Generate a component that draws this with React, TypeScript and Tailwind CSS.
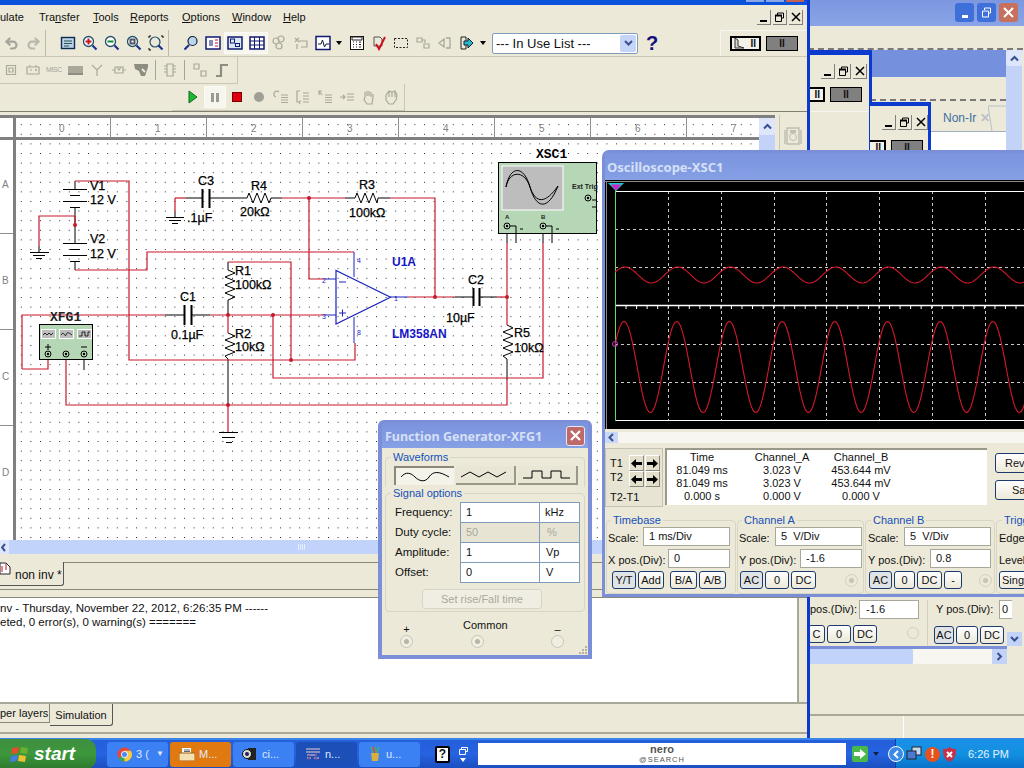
import type { ReactNode } from "react";
import { Redo2, Undo2 } from "lucide-react";

const RED = "#c8182c";
const BLUE = "#1a22c0";

const wave = (amp: number, centre: number, peak: number) => {
  const pts: string[] = [];
  for (let x = 615; x <= 1030; x += 1) {
    const y = centre - amp * Math.cos((2 * Math.PI * (x - peak)) / 52.7);
    pts.push(`${x},${y.toFixed(1)}`);
  }
  return pts.join(" ");
};

function I({ children, size = 16 }: { children: ReactNode; size?: number }) {
  return (
    <svg width={size} height={size} viewBox="0 0 16 16" fill="none">
      {children}
    </svg>
  );
}

function Slot({ children, active }: { children?: ReactNode; active?: boolean }) {
  return (
    <div
      className={
        active
          ? "flex h-[22px] w-[22px] items-center justify-center border border-[#fbfaf5] bg-[#f6f5ee]"
          : "flex h-[22px] w-[22px] items-center justify-center"
      }
    >
      {children}
    </div>
  );
}

function Mag({ mark, colour }: { mark: string; colour: string }) {
  return (
    <I>
      <circle cx="6.5" cy="6.5" r="5" fill="#fff" stroke="#20506a" strokeWidth="1.3" />
      <path d={mark} stroke={colour} strokeWidth="2" />
      <path d="M10.5 10.5l4 4" stroke="#1b2f90" strokeWidth="2.2" />
    </I>
  );
}

function Caret() {
  return <div className="h-0 w-0 border-x-[3px] border-t-[4px] border-x-transparent border-t-black" />;
}

function GreyIcon({ d }: { d: string }) {
  return (
    <I>
      <path d={d} stroke="#a9a89b" strokeWidth="1.2" />
    </I>
  );
}

function Toolbar1() {
  return (
    <div className="flex h-[27px] items-center border-b border-[#c9c6b4]">
      <div className="flex h-full w-[46px] items-center border-r border-[#bdbaa8]">
        <Slot>
          <Undo2 size={15} strokeWidth={3.4} color="#a5a49a" />
        </Slot>
        <Slot>
          <Redo2 size={15} strokeWidth={3.4} color="#b9b8ac" />
        </Slot>
      </div>
      <div className="flex h-full w-[123px] items-center border-r border-[#bdbaa8] pl-[11px]">
        <Slot>
          <I>
            <rect x="1.5" y="2.5" width="13" height="11" fill="#bcd0e8" stroke="#0d2a50" strokeWidth="1.4" />
            <path d="M4 6h8M4 8.5h8M4 11h5" stroke="#255" />
          </I>
        </Slot>
        <Slot>
          <Mag mark="M3.5 6.5h6M6.5 3.5v6" colour="#c81226" />
        </Slot>
        <Slot>
          <Mag mark="M3.5 6.5h6" colour="#0f8a3a" />
        </Slot>
        <Slot>
          <Mag mark="M4.5 4.5h4v4h-4z" colour="#556" />
        </Slot>
        <Slot>
          <I>
            <circle cx="7" cy="7" r="5" stroke="#20506a" strokeWidth="1.2" />
            <path d="M10.5 10.5l4 4" stroke="#1b2f90" strokeWidth="2.2" />
            <path d="M1 3V1h2M13 1h2v2M1 13v2h2" stroke="#000" />
          </I>
        </Slot>
      </div>
      <div className="flex h-full items-center pl-[11px]">
        <Slot>
          <I>
            <circle cx="9.5" cy="6" r="4.5" fill="#bcd4ee" stroke="#123" strokeWidth="1.2" />
            <path d="M6 10l-4.5 4.5" stroke="#1b2f90" strokeWidth="2.2" />
          </I>
        </Slot>
        <Slot>
          <I>
            <rect x="1" y="2" width="14" height="12" fill="#fff" stroke="#101a70" strokeWidth="1.5" />
            <path d="M5 5v6M7 5v6" stroke="#101a70" />
            <path d="M10 5h3M10 8h3M10 11h3" stroke="#c81226" />
          </I>
        </Slot>
        <Slot active>
          <I>
            <rect x="1" y="2" width="14" height="12" fill="#dce6f2" stroke="#101a70" strokeWidth="1.5" />
            <rect x="3.5" y="4" width="4" height="4" stroke="#101a70" />
            <rect x="8.5" y="8.5" width="4" height="3" stroke="#101a70" />
          </I>
        </Slot>
        <Slot active>
          <I>
            <rect x="1" y="2" width="14" height="12" fill="#fff" stroke="#101a70" strokeWidth="1.5" />
            <path d="M1 6h14M1 10h14M5.5 2v12M10.5 2v12" stroke="#101a70" />
          </I>
        </Slot>
        <Slot>
          <GreyIcon d="M2 6a3 3 0 1 1 6 0a3 3 0 1 1-6 0M7 4a3 3 0 1 1 6 0a3 3 0 1 1-6 0M5 11a3 3 0 1 1 6 0a3 3 0 1 1-6 0" />
        </Slot>
        <Slot>
          <GreyIcon d="M2 3l4 4M6 3L2 7M6 6h8v6H8M4 9v5" />
        </Slot>
        <Slot>
          <I>
            <rect x="1" y="1.5" width="14" height="13" fill="#fff" stroke="#101a70" strokeWidth="1.5" />
            <path d="M3 9h3l1.5-4 2 7 1.5-3h3" stroke="#123" />
          </I>
        </Slot>
        <div className="flex w-[10px] justify-center">
          <Caret />
        </div>
        <div className="w-[2px]" />
        <Slot>
          <I>
            <rect x="1.5" y="1.5" width="13" height="13" fill="#fff" stroke="#111" />
            <path d="M3 2h10v3H3zM4 7h1M7 7h1M10 7h2M4 9.5h1M7 9.5h1M10 9.5h2M4 12h1M7 12h1M10 12h2" stroke="#222" />
          </I>
        </Slot>
        <Slot>
          <I>
            <path d="M3 2h6l2 2v7H3z" stroke="#555" />
            <path d="M5 9l3 5 6-12" stroke="#d0121f" strokeWidth="2" />
          </I>
        </Slot>
        <Slot>
          <I>
            <rect x="1.5" y="3.5" width="13" height="9" stroke="#222" strokeDasharray="2 1.5" />
          </I>
        </Slot>
        <Slot>
          <GreyIcon d="M2 3h5v4H2zM9 9h5v4H9zM7 5h3v3" />
        </Slot>
        <Slot>
          <I>
            <path d="M2 8l5-4v8zM9 3h4v10H9" stroke="#a9a89b" strokeWidth="1.3" />
          </I>
        </Slot>
        <Slot>
          <I>
            <path d="M2 2h5v12H2z" stroke="#222" />
            <path d="M5 6h4V3l5 5-5 5v-3H5z" fill="#28b8c8" stroke="#123" />
          </I>
        </Slot>
        <div className="flex w-[10px] justify-center">
          <Caret />
        </div>
        <div className="ml-[4px] flex h-[21px] w-[146px] items-center rounded-[2px] border border-[#7f9db9] bg-white pl-[3px] text-[13px]">
          <span className="flex-1 leading-none">--- In Use List ---</span>
          <div className="mr-px flex h-[17px] w-[16px] items-center justify-center rounded-[2px] bg-[#c5d5f7]">
            <svg width="9" height="7" viewBox="0 0 9 7" fill="none">
              <path d="M1 1l3.5 3.5L8 1" stroke="#3a4f8f" strokeWidth="2" />
            </svg>
          </div>
        </div>
        <span className="ml-[8px] text-[20px] leading-none font-bold text-[#12127a]">?</span>
      </div>
      <div className="ml-auto flex h-full w-[87px] items-center justify-center gap-[5px] border-l border-t border-[#f6f5ef]">
        <Mini />
      </div>
    </div>
  );
}

function Toolbar2() {
  return (
    <div className="flex h-[27px] w-[238px] items-center gap-0 border-b border-r border-[#c9c6b4]">
      <Slot>
        <GreyIcon d="M3.5 3.5h9v9h-9zM6 6h4v4H6z" />
      </Slot>
      <Slot>
        <GreyIcon d="M2 5h12v7H2zM5 3v2M11 3v2M5 8h2M10 8h2M11 7v2" />
      </Slot>
      <span className="w-[20px] text-center text-[7px] tracking-tighter text-[#a5a499]">MISC</span>
      <Slot>
        <div className="h-[9px] w-[15px] border-b-2 border-[#8e8d82] bg-[#a9a89b]" />
      </Slot>
      <Slot>
        <GreyIcon d="M3 3l5 5 5-5M8 8v6" />
      </Slot>
      <Slot>
        <GreyIcon d="M1 8h3M12 8h3M4 5h8v6H4zM6 5l2 3 2-3" />
      </Slot>
      <Slot>
        <svg width="16" height="16" viewBox="0 0 16 16">
          <path d="M1 2h14v3l-3 9H8L6 9 2 7z" fill="#8e8d82" />
          <path d="M9 7l3 3" stroke="#ece9d8" strokeWidth="2" />
        </svg>
      </Slot>
      <div className="mx-[3px] h-[20px] w-px bg-[#a5a499]" />
      <Slot>
        <GreyIcon d="M5 2h6v12H5zM2 4h3M2 7h3M2 10h3M11 4h3M11 7h3M11 10h3" />
      </Slot>
      <div className="ml-[3px] h-[20px] w-px bg-[#a5a499]" />
      <div className="w-[4px]" />
      <Slot>
        <GreyIcon d="M2 2h5v5H2zM9 9h5v5H9z" />
      </Slot>
      <Slot>
        <I>
          <path d="M2 14h5V3h7" stroke="#8e8d82" strokeWidth="2.2" />
        </I>
      </Slot>
    </div>
  );
}

function Toolbar3() {
  return (
    <div className="ml-[172px] flex h-[27px] w-[233px] items-center border-r border-b border-[#c9c6b4] pl-[10px]">
      <Slot>
        <svg width="10" height="14" viewBox="0 0 10 14">
          <path d="M1 1l8 6-8 6z" fill="#21b534" stroke="#0e6b1c" />
        </svg>
      </Slot>
      <Slot active>
        <div className="flex gap-[2px]">
          <div className="h-[9px] w-[3px] bg-[#9a9a90]" />
          <div className="h-[9px] w-[3px] bg-[#9a9a90]" />
        </div>
      </Slot>
      <Slot>
        <div className="h-[10px] w-[10px] border border-[#700] bg-[#e0000f]" />
      </Slot>
      <Slot>
        <div className="h-[10px] w-[10px] rounded-full bg-[#a09f94]" />
      </Slot>
      <Slot>
        <GreyIcon d="M3 8a3 3 0 1 1 3-5M8 6h7M8 8.5h7M8 11h7M8 13.5h7" />
      </Slot>
      <Slot>
        <GreyIcon d="M5 2H2v11h3M8 4h6M8 7h6M8 10h6M8 13h6M5 15l-1-2 2-1" />
      </Slot>
      <Slot>
        <GreyIcon d="M2 6V2h3M2 2l3 4M8 6h7M8 8.5h7M8 11h7M8 13.5h7" />
      </Slot>
      <Slot>
        <GreyIcon d="M1 8h5M4 6l2 2-2 2M8 5h7M8 8h7M8 11h7" />
      </Slot>
      <Slot>
        <GreyIcon d="M4 8V3M6 7V2M8 7V2M10 8V3M12 8V5M4 8l-1 3 3 4h5l1-7" />
      </Slot>
      <Slot>
        <GreyIcon d="M3 6l3-4 3 1 3-1 2 4-1 5-3 4H6l-3-4zM6 2v6M9 3v5M12 3v5" />
      </Slot>
    </div>
  );
}

function Lbl({ x, y, t }: { x: number; y: number; t: string }) {
  return (
    <text x={x} y={y} fontSize="12.5" fill="#000" stroke="#000" strokeWidth="0.25">
      {t}
    </text>
  );
}

function Dot({ x, y, r = 2 }: { x: number; y: number; r?: number }) {
  return <circle cx={x} cy={y} r={r} fill={RED} />;
}

function Node({ x, y }: { x: number; y: number }) {
  return (
    <g>
      <circle cx={x} cy={y} r="3" fill="none" stroke="#000" />
      <circle cx={x} cy={y} r="1.2" fill="#000" />
    </g>
  );
}

function Schematic() {
  const wires = [
    "M75 181H129V360H355V343",
    "M75 216H39V246",
    "M75 216V225",
    "M75 270H147V252H354",
    "M228 262H291V360",
    "M22 369V315H165",
    "M22 369H48V358",
    "M210 315H325",
    "M228 315V333",
    "M273 315V378H543V243",
    "M66 358V405H507V380",
    "M228 405V432",
    "M175 198H186",
    "M175 198V212",
    "M282 198H345",
    "M390 198H435V297",
    "M309 198V279H325",
    "M408 297H455",
    "M497 297H507",
    "M507 243V325",
  ];
  const black = [
    "M75 181V189M75 207V243M75 261V270",
    "M63 189.5H87M70 195.5H80M63 201.5H87M70 207.5H80",
    "M63 243.5H87M70 249.5H80M63 255.5H87M70 261.5H80",
    "M39 246V252M30 252.5H49M33 255.5H45M36 258.5H42",
    "M219 432.5H238M222 437.5H235M226 442.5H232",
    "M175 212V217M166 217.5H184M169 220.5H181M172 223.5H178",
    "M186 198H202M202.5 189V208M209.5 189V208M210 198H238",
    "M238 198H247l2-5 4 10 4-10 4 10 4-10 4 10 2-5H282",
    "M345 198H355l2-5 4 10 4-10 4 10 4-10 4 10 1-5H390",
    "M165 315H184M184.5 305V325M191.5 305V325M192 315H210",
    "M228 262V270l7 3-10 4 10 4-10 4 10 4-10 4 10 4-7 3V315",
    "M228 333l7 3-10 4 10 4-10 4 10 4-10 4 3 3V405",
    "M455 297H473M473.5 288V306M479.5 288V306M480 297H497",
    "M507 325l6 3-10 4 10 4-10 4 10 4-10 4 10 4-10 4 4 3V380",
    "M84 358V370",
    "M507 226V243M543 226V243",
  ];
  return (
    <svg className="block h-full w-full" viewBox="0 118 759 422" preserveAspectRatio="none">
      <defs>
        <pattern id="dots" x="1.6" y="143.4" width="9.6" height="9.6" patternUnits="userSpaceOnUse">
          <rect x="0" y="0" width="1" height="1" fill="#222" shapeRendering="crispEdges" />
        </pattern>
      </defs>
      <rect x="0" y="118" width="759" height="422" fill="#fff" />
      <rect x="16" y="124" width="743" height="416" fill="url(#dots)" />

      <rect x="0" y="137" width="759" height="3" fill="#808080" />
      <rect x="13" y="118" width="3" height="422" fill="#808080" />
      {[110, 206, 302, 398, 494, 590, 686].map((x) => (
        <rect key={x} x={x} y="118" width="1" height="19" fill="#909090" />
      ))}
      {["0", "1", "2", "3", "4", "5", "6", "7"].map((t, i) => (
        <text key={t} x={59 + i * 96} y="132" fontSize="10" fill="#808080">
          {t}
        </text>
      ))}
      {[233, 329, 425].map((y) => (
        <rect key={y} x="0" y={y} width="13" height="1" fill="#909090" />
      ))}
      {["A", "B", "C", "D"].map((t, i) => (
        <text key={t} x="2" y={188 + i * 96} fontSize="10" fill="#808080">
          {t}
        </text>
      ))}

      {black.map((d) => (
        <path key={d} d={d} fill="none" stroke="#000" strokeWidth="1" />
      ))}
      <path d="M202.5 189V208M209.5 189V208M184.5 305V325M191.5 305V325M473.5 288V306M479.5 288V306" stroke="#000" strokeWidth="2" />
      {wires.map((d) => (
        <path key={d} d={d} fill="none" stroke={RED} strokeWidth="1.2" />
      ))}
      <Dot x={75} y={225} />
      <Dot x={309} y={198} />
      <Dot x={228} y={315} />
      <Dot x={273} y={315} />
      <Dot x={291} y={360} />
      <Dot x={228} y={405} />
      <Dot x={435} y={297} />
      <Dot x={507} y={297} />

      <path d="M336 270.5V324L390.5 297.3Z" fill="none" stroke={BLUE} strokeWidth="1.2" />
      <path d="M325 279H336M325 315H336M390 297H408M354 252V277M354 317V343M339 282H346M339 313H346M342.5 309.5V316.5" fill="none" stroke={BLUE} strokeWidth="1" />
      <g fill={BLUE} fontSize="7">
        <text x="357" y="263">4</text>
        <text x="322" y="283">2</text>
        <text x="322" y="319">3</text>
        <text x="394" y="301">1</text>
        <text x="357" y="335">8</text>
      </g>
      <g fill="#1515c8" fontSize="12" fontWeight="700">
        <text x="392" y="266">U1A</text>
        <text x="392" y="338">LM358AN</text>
      </g>

      <Lbl x={90} y={190} t="V1" />
      <Lbl x={90} y={204} t="12 V" />
      <Lbl x={90} y={243} t="V2" />
      <Lbl x={90} y={258} t="12 V" />
      <Lbl x={198} y={185} t="C3" />
      <Lbl x={187} y={222} t=".1µF" />
      <Lbl x={251} y={190} t="R4" />
      <Lbl x={240} y={216} t="20kΩ" />
      <Lbl x={180} y={301} t="C1" />
      <Lbl x={171} y={339} t="0.1µF" />
      <Lbl x={235} y={275} t="R1" />
      <Lbl x={235} y={289} t="100kΩ" />
      <Lbl x={235} y={338} t="R2" />
      <Lbl x={235} y={351} t="10kΩ" />
      <Lbl x={359} y={189} t="R3" />
      <Lbl x={349} y={217} t="100kΩ" />
      <Lbl x={468} y={284} t="C2" />
      <Lbl x={446} y={322} t="10µF" />
      <Lbl x={514} y={337} t="R5" />
      <Lbl x={514} y={352} t="10kΩ" />

      <rect x="39.5" y="324.5" width="53" height="35" fill="#b6d7b6" stroke="#000" />
      {[41, 59, 77].map((x) => (
        <rect key={x} x={x + 0.5} y="329.5" width="14" height="9" fill="#bdbdbd" stroke="#fff" />
      ))}
      <path d="M43 335l2-2 2 2 2-2 2 2 2-2M61 335c3-5 4 3 5 0s2-3 6 0M79 336h3v-4h3v4h3v-4h2" fill="none" stroke="#000" strokeWidth="0.8" />
      <path d="M45 347h6M48 344v6M81 347h6" stroke="#000" />
      <Node x={48} y={354} />
      <Node x={66} y={354} />
      <Node x={84} y={354} />
      <text x="50" y="321" fontSize="13" fontWeight="700" fontFamily="'Liberation Mono',monospace" fill="#222">
        XFG1
      </text>

      <rect x="498.5" y="162.5" width="98" height="71" fill="#b6d7b6" stroke="#000" />
      <rect x="502" y="166" width="61" height="44" fill="#bdbdbd" stroke="#fff" />
      <path d="M506 187c4-22 18-22 24 0s18 24 28 -1M506 187c3-16 18-18 24 0s16 16 28 -1" fill="none" stroke="#000" />
      <text x="572" y="189" fontSize="7" fontWeight="700" fill="#222">
        Ext Trig
      </text>
      <text x="505" y="219" fontSize="6" fontWeight="700" fill="#222">
        A
      </text>
      <text x="541" y="219" fontSize="6" fontWeight="700" fill="#222">
        B
      </text>
      <Node x={507} y={226} />
      <Node x={543} y={226} />
      <Node x={588} y={198} />
      <path d="M510 226H516V243M546 226H552V243M520 229H523M556 229H559M592 200H597M592 207H597" fill="none" stroke="#000" />
      <text x="536" y="158" fontSize="13" fontWeight="700" fontFamily="'Liberation Mono',monospace" fill="#000">
        XSC1
      </text>
    </svg>
  );
}

function MdiButtons() {
  return (
    <div className="flex items-center gap-[2px]">
      <div className="flex h-[15px] w-[14px] items-end justify-center border-r border-b border-[#808080] bg-[#ece9d8] pb-[2px]">
        <div className="h-[2px] w-[7px] bg-black" />
      </div>
      <div className="flex h-[15px] w-[14px] items-center justify-center border-r border-b border-[#808080]">
        <svg width="11" height="11" viewBox="0 0 11 11" fill="none">
          <path d="M3.5 3V1h6v5H8M1.5 3.5h6v6h-6z" stroke="#000" />
          <path d="M1 3.5h7" stroke="#000" strokeWidth="2" />
        </svg>
      </div>
      <div className="flex h-[15px] w-[14px] items-center justify-center border-r border-b border-[#808080]">
        <svg width="10" height="10" viewBox="0 0 10 10" fill="none">
          <path d="M1 1l8 8M9 1l-8 8" stroke="#000" strokeWidth="1.5" />
        </svg>
      </div>
    </div>
  );
}

function Mini() {
  return (
    <div className="flex shrink-0 gap-[5px]">
      <div className="relative h-[15px] w-[31px] border-2 border-double border-black bg-[#f2f1ea] pr-[3px] text-right text-[10px] leading-[11px] font-bold">
        <svg className="absolute top-[-1px] left-[1px]" width="12" height="12" viewBox="0 0 12 12" fill="none">
          <path d="M2 11V1l3 2v6l6 2z" fill="#d8d7cd" stroke="#333" />
        </svg>
        II
      </div>
      <div className="h-[15px] w-[32px] border border-black bg-[#808080] text-center text-[10px] leading-[13px] font-bold">
        II
      </div>
    </div>
  );
}

function BackgroundWindows() {
  return (
    <div className="absolute top-0 left-[808px] h-[738px] w-[216px] bg-[#ece9d8]">
      <div className="flex h-[26px] items-start justify-end gap-[3px] bg-gradient-to-b from-[#7d97df] to-[#8aa4e8] pt-[3px] pr-[6px]">
        <div className="flex h-[19px] w-[19px] items-end justify-center rounded-[3px] bg-[#3f6fd8] pb-[4px]">
          <div className="h-[3px] w-[6px] bg-white" />
        </div>
        <div className="flex h-[19px] w-[19px] items-center justify-center rounded-[3px] bg-[#3f6fd8]">
          <svg width="11" height="11" viewBox="0 0 11 11" fill="none">
            <path d="M3.5 3V1h6v5H8M1.5 4h6v6h-6z" stroke="#fff" />
          </svg>
        </div>
        <div className="flex h-[19px] w-[19px] items-center justify-center rounded-[3px] bg-[#c8705e]">
          <svg width="11" height="11" viewBox="0 0 11 11" fill="none">
            <path d="M1 1l9 9M10 1l-9 9" stroke="#fff" strokeWidth="2" />
          </svg>
        </div>
      </div>

      <div className="absolute top-[48px] right-[1px] left-0 border-t-2 border-dashed border-[#7a7a7a]" />

      <div className="absolute top-[50px] left-[62px] h-[100px] w-[136px]">
        <div className="h-[27px] bg-[#7590dc]" />
        <div className="absolute top-[49px] right-0 left-0 border-t-2 border-dashed border-[#7a7a7a]" />
        <div className="absolute top-[56px] left-[73px] flex w-[63px] items-center gap-[4px] pt-[3px]">
          <span className="text-[12px] whitespace-nowrap text-[#3f6f9c]">Non-Ir</span>
          <span className="text-[12px] leading-[16px] font-bold text-[#b8c0c8]">✕</span>
        </div>
        <svg className="absolute top-[52px] left-[118px]" width="18" height="30" viewBox="0 0 18 30" fill="none">
          <path d="M4 29L0 4h18" stroke="#b8c0c8" />
        </svg>
        <div className="absolute top-[81px] left-[60px] h-[20px] w-[76px] border-t border-[#9db0c4] bg-white" />
      </div>

      <div className="absolute top-[50px] right-[2px] h-[100px] w-[16px] bg-[#c3d3f8]">
        <div className="flex h-[16px] items-center justify-center rounded-[2px] bg-[#dde6fb]">
          <svg width="9" height="7" viewBox="0 0 9 7" fill="none">
            <path d="M1 5.5l3.5-3.5L8 5.5" stroke="#3a4f8f" strokeWidth="2" />
          </svg>
        </div>
      </div>

      <div className="absolute top-[50px] left-0 h-[100px] w-[64px] border-t-[5px] border-r-[3px] border-[#0a3ad0] bg-[#ece9d8] pt-[9px]">
        <div className="flex justify-end pr-[2px]">
          <MdiButtons />
        </div>
        <div className="mt-[8px] w-[61px] border-b border-[#f6f5ef] pb-[9px]">
          <div className="w-[54px] overflow-hidden">
            <div className="-ml-[14px]">
              <Mini />
            </div>
          </div>
        </div>
      </div>

      <div className="absolute top-[102px] left-[62px] h-[48px] w-[61px] border-t-[4px] border-r-[3px] border-[#0a3ad0] bg-[#ece9d8] pt-[9px]">
        <div className="flex justify-end">
          <MdiButtons />
        </div>
        <div className="mt-[10px] w-[54px] overflow-hidden">
          <div className="-ml-[15px]">
            <Mini />
          </div>
        </div>
      </div>

      <div className="absolute top-[597px] left-0 flex h-[49px] w-full pt-[3px]">
        <div className="w-[111px]">
          <div className="flex h-[19px] items-center">
            <span className="ml-[2px] w-[51px]">pos.(Div):</span>
            <div className="h-[19px] w-[62px] border border-[#a8a89a] bg-white pl-[6px] leading-[17px]">-1.6</div>
          </div>
          <div className="mt-[6px] flex gap-[2px]">
            <Chip w={17} t="C" />
            <Chip w={24} t="0" />
            <Chip w={24} t="DC" />
            <div className="mt-[2px] ml-[28px] h-[12px] w-[12px] rounded-full border border-[#d4d0c0]" />
          </div>
        </div>
        <div className="ml-[8px] border-l border-[#d4d0c0] pl-[3px]">
          <div className="flex h-[19px] items-center">
            <span className="ml-[5px] w-[63px]">Y pos.(Div):</span>
            <div className="h-[19px] w-[13px] border border-r-0 border-[#a8a89a] bg-white pl-[2px] leading-[17px]">0</div>
          </div>
          <div className="mt-[7px] ml-[3px] flex gap-[2px]">
            <Chip w={20} t="AC" on />
            <Chip w={22} t="0" />
            <Chip w={24} t="DC" />
          </div>
        </div>
      </div>
      <div className="absolute top-[632px] right-[2px] flex h-[14px] w-[15px] items-center justify-center bg-[#c3d3f8]">
        <svg width="9" height="7" viewBox="0 0 9 7" fill="none">
          <path d="M1 1l3.5 3.5L8 1" stroke="#3a4f8f" strokeWidth="2" />
        </svg>
      </div>

      <div className="absolute top-[646px] left-[2px] w-[197px] border-t-[3px] border-[#7b8ed8]">
        <div className="flex h-[15px]">
          <div className="w-[103px] rounded-r-[2px] bg-[#c1d3fb]" />
          <div className="flex-1 bg-[#f7f6f0]" />
          <div className="flex w-[15px] items-center justify-center bg-[#c3d3f8]">
            <svg width="7" height="9" viewBox="0 0 7 9" fill="none">
              <path d="M1.5 1l3.5 3.5L1.5 8" stroke="#3a4f8f" strokeWidth="2" />
            </svg>
          </div>
        </div>
      </div>

      <div className="absolute right-0 bottom-0 left-0 flex h-[24px] border-t-2 border-[#aca899]">
        <div className="w-[96px] border-r border-[#fff]" />
        <div className="flex-1" />
      </div>
    </div>
  );
}

function Chip({ w, t, on }: { w: number; t: string; on?: boolean }) {
  return (
    <div
      style={{ width: w }}
      className={
        on
          ? "flex h-[18px] shrink-0 items-center justify-center rounded-[3px] border border-[#1c3a6e] bg-[#dfe3e6]"
          : "flex h-[18px] shrink-0 items-center justify-center rounded-[3px] border border-[#1c3a6e] bg-gradient-to-b from-white to-[#ece9d8]"
      }
    >
      {t}
    </div>
  );
}

function Group({ title, className, children }: { title: string; className: string; children: ReactNode }) {
  return (
    <fieldset className={`shrink-0 rounded-[4px] border border-[#d8d5c4] ${className}`}>
      <legend className="ml-[3px] px-[2px] leading-[13px] text-[#1550b8]">{title}</legend>
      {children}
    </fieldset>
  );
}

function Field({ label, lw, w, value }: { label: string; lw: number; w: number; value: string }) {
  return (
    <div className="mb-[3px] flex h-[19px] items-center">
      <span style={{ width: lw }} className="shrink-0 pt-[3px]">
        {label}
      </span>
      <div style={{ width: w }} className="h-[19px] shrink-0 border border-[#a8a89a] bg-white pl-[5px] leading-[17px] whitespace-pre">
        {value}
      </div>
    </div>
  );
}

function Arrow({ left }: { left?: boolean }) {
  return (
    <div className="flex h-[16px] w-[15px] items-center justify-center border-t border-r border-b border-l border-t-white border-r-[#8a8878] border-b-[#8a8878] border-l-white bg-[#e2dfcd]">
      <svg width="11" height="9" viewBox="0 0 11 9">
        {left ? <path d="M0 4.5L5 0v3h6v3H5v3z" fill="#000" /> : <path d="M11 4.5L6 0v3H0v3h6v3z" fill="#000" />}
      </svg>
    </div>
  );
}

function Oscilloscope() {
  const a = wave(8, 275, 625);
  const b = wave(45.5, 367, 624);
  return (
    <div className="absolute top-[150px] left-[602px] h-[447px] w-[440px] rounded-t-[7px] border-[3px] border-b-[3px] border-[#7b8ed8] bg-[#ece9d8]">
      <div className="flex h-[27px] items-center bg-gradient-to-b from-[#7b94dd] to-[#86a0e6] pt-[2px] pl-[2px] [font-family:'Noto_Sans',sans-serif] text-[13px] font-bold text-[#d6e0f6]">
        Oscilloscope-XSC1
      </div>
      <div className="h-[249px]">
        <svg className="block h-full w-full" viewBox="605 180 434 249" preserveAspectRatio="none">
          <rect x="605" y="180" width="434" height="249" fill="#000" />
          <path d="M605 181.5H1039M606.5 181V429" stroke="#8b8b80" />
          {[668, 721, 774, 826, 879, 932, 985].map((x) => (
            <path key={x} d={`M${x}.5 191V420`} stroke="#c8c8c8" strokeDasharray="3 3" />
          ))}
          {[229, 267, 344, 382].map((y) => (
            <path key={y} d={`M615 ${y}.5H1039`} stroke="#c8c8c8" strokeDasharray="3 3" />
          ))}
          <path d="M615 191.5H1039M615 420.5H1039" stroke="#fff" />
          <path d="M615 305.5H1039" stroke="#fff" strokeWidth="1.5" />
          {Array.from({ length: 41 }, (_, i) => (
            <rect key={i} x={615 + i * 10.54} y="306" width="1" height="3" fill="#fff" />
          ))}
          <path d="M615.5 190V421" stroke="#5fdc5f" />
          <polyline points={a} fill="none" stroke="#d4182c" strokeWidth="1.1" />
          <polyline points={b} fill="none" stroke="#d4182c" strokeWidth="1.1" />
          <path d="M608 183H624L616 191Z" fill="#20c8d0" />
          <path d="M611 184.5H621L616 190.5Z" fill="#d020c8" />
          <circle cx="615" cy="344" r="2.5" fill="none" stroke="#c040e0" />
        </svg>
      </div>
      <div className="flex h-[16px] items-start pt-[3px]">
        <div className="flex h-[11px] w-full bg-[#f7f6f0]">
          <div className="flex w-[13px] items-center justify-center bg-[#c9d8f8]">
            <svg width="7" height="9" viewBox="0 0 7 9" fill="none">
              <path d="M5 1L1.5 4.5 5 8" stroke="#3a4f8f" strokeWidth="2" />
            </svg>
          </div>
        </div>
      </div>
      <div className="flex h-[64px] items-start pt-[3px]">
        <div className="flex h-[59px] w-[58px] shrink-0 border border-[#c6c3b0] bg-[#e7e4d3] pl-[4px]">
          <div className="w-[19px] pt-[7px] leading-[14px]">
            <div>T1</div>
            <div>T2</div>
            <div className="mt-[6px] w-[34px]">T2-T1</div>
          </div>
          <div className="grid h-[33px] grid-cols-2 gap-x-[1px] pt-[6px]">
            <Arrow left />
            <Arrow />
            <Arrow left />
            <Arrow />
          </div>
        </div>
        <div className="ml-[2px] grid h-[57px] w-[322px] shrink-0 grid-cols-[70px_90px_68px] border-t-2 border-l-2 border-[#9a9888] bg-white pt-[1px] text-center leading-[13px]">
          <div>
            <div>Time</div>
            <div>81.049 ms</div>
            <div>81.049 ms</div>
            <div>0.000 s</div>
          </div>
          <div>
            <div>Channel_A</div>
            <div>3.023 V</div>
            <div>3.023 V</div>
            <div>0.000 V</div>
          </div>
          <div>
            <div>Channel_B</div>
            <div>453.644 mV</div>
            <div>453.644 mV</div>
            <div>0.000 V</div>
          </div>
        </div>
        <div className="ml-[8px] flex w-[50px] shrink-0 flex-col gap-[7px] pt-[5px]">
          <div className="h-[20px] rounded-[3px] border border-[#1c3a6e] bg-gradient-to-b from-white to-[#ece9d8] pl-[9px] leading-[18px]">Reverse</div>
          <div className="h-[20px] rounded-[3px] border border-[#1c3a6e] bg-gradient-to-b from-white to-[#ece9d8] pl-[16px] leading-[18px]">Save</div>
        </div>
      </div>
      <div className="mt-[5px] flex gap-[1px] pl-[1px]">
        <Group title="Timebase" className="h-[80px] w-[130px] pl-[1px]">
          <Field label="Scale:" lw={35} w={87} value="1 ms/Div" />
          <Field label="X pos.(Div):" lw={60} w={62} value="0" />
          <div className="mt-[1px] ml-[4px] flex gap-[2px]">
            <Chip w={24} t="Y/T" on />
            <Chip w={26} t="Add" />
            <div className="w-[2px]" />
            <Chip w={27} t="B/A" />
            <Chip w={27} t="A/B" />
          </div>
        </Group>
        <Group title="Channel A" className="h-[80px] w-[127px] pl-[1px]">
          <Field label="Scale:" lw={36} w={87} value="5  V/Div" />
          <Field label="Y pos.(Div):" lw={61} w={62} value="-1.6" />
          <div className="mt-[1px] flex items-center gap-[2px] pl-[1px]">
            <Chip w={23} t="AC" on />
            <Chip w={24} t="0" />
            <Chip w={25} t="DC" />
            <div className="ml-[27px] flex h-[13px] w-[13px] items-center justify-center rounded-full border border-[#d4d0c0]">
              <div className="h-[5px] w-[5px] rounded-full bg-[#c8c5b4]" />
            </div>
          </div>
        </Group>
        <Group title="Channel B" className="h-[80px] w-[130px] pl-[2px]">
          <Field label="Scale:" lw={36} w={87} value="5  V/Div" />
          <Field label="Y pos.(Div):" lw={62} w={61} value="0.8" />
          <div className="mt-[3px] flex items-center gap-[2px] pl-[1px]">
            <Chip w={23} t="AC" on />
            <Chip w={21} t="0" />
            <Chip w={25} t="DC" />
            <Chip w={18} t="-" />
            <div className="ml-[15px] flex h-[13px] w-[13px] items-center justify-center rounded-full border border-[#d4d0c0]">
              <div className="h-[5px] w-[5px] rounded-full bg-[#c8c5b4]" />
            </div>
          </div>
        </Group>
        <Group title="Trigger" className="h-[80px] w-[60px] pl-[2px]">
          <div className="mb-[3px] h-[19px] pt-[3px]">Edge:</div>
          <div className="mb-[3px] h-[19px] pt-[3px]">Level:</div>
          <div className="mt-[1px] flex h-[18px] w-[56px] items-center rounded-[3px] border border-[#1c3a6e] bg-gradient-to-b from-white to-[#ece9d8] pl-[2px]">
            Single
          </div>
        </Group>
      </div>
    </div>
  );
}

function WaveBtn({ d, pressed }: { d: string; pressed?: boolean }) {
  return (
    <div
      className={
        pressed
          ? "flex h-[19px] w-[60px] items-center justify-center border-t-2 border-l-2 border-[#8a8878] bg-[#f4f3ea]"
          : "flex h-[19px] w-[60px] items-center justify-center border-r-2 border-b-2 border-[#9a9888] bg-[#e9e6d6]"
      }
    >
      <svg width="48" height="11" viewBox="0 0 48 11" fill="none">
        <path d={d} stroke="#000" />
      </svg>
    </div>
  );
}

function Terminal({ filled }: { filled?: boolean }) {
  return (
    <div className="flex h-[13px] w-[13px] items-center justify-center rounded-full border border-[#c8c5b4] bg-[#f0eee2]">
      {filled && <div className="h-[5px] w-[5px] rounded-full bg-[#b8b5a4]" />}
    </div>
  );
}

function FunctionGenerator() {
  const cell = "flex h-[20px] items-center border-r border-b border-[#7f9db9] bg-white pl-[5px]";
  const off = "flex h-[20px] items-center border-r border-b border-[#7f9db9] bg-[#e7e4d3] pl-[5px] text-[#a9a89c]";
  return (
    <div className="absolute top-[420px] left-[378px] h-[239px] w-[214px] rounded-t-[6px] border-[4px] border-t-[3px] border-[#7b8ed8] bg-[#ece9d8]">
      <div className="flex h-[25px] items-center justify-between bg-gradient-to-b from-[#7b94dd] to-[#86a0e6] pl-[3px] [font-family:'Noto_Sans',sans-serif] text-[12.5px] font-bold text-[#d6e0f6]">
        <span className="pt-[3px]">Function Generator-XFG1</span>
        <div className="mr-[3px] flex h-[20px] w-[19px] items-center justify-center rounded-[3px] border border-[#e8e8f0] bg-[#bf6a6a]">
          <svg width="11" height="11" viewBox="0 0 11 11" fill="none">
            <path d="M1 1l9 9M10 1l-9 9" stroke="#fff" strokeWidth="2.2" />
          </svg>
        </div>
      </div>
      <div className="px-[3px]">
        <fieldset className="mt-[3px] h-[36px] rounded-t-[4px] border border-b-0 border-[#d8d5c4] pl-[8px]">
          <legend className="-ml-[3px] px-[2px] leading-[13px] text-[#1550b8]">Waveforms</legend>
          <div className="mt-[2px] flex gap-[2px]">
            <WaveBtn pressed d="M0 6c5-6 10-4 14 0s10 6 14 0 10-6 20 0" />
            <WaveBtn d="M0 8l9-5 9 5 9-5 9 5 9-5" />
            <WaveBtn d="M0 9h9V2h10v7h9V2h10v7h9" />
          </div>
        </fieldset>
        <fieldset className="h-[125px] rounded-[4px] border border-[#d8d5c4] pl-[9px]">
          <legend className="-ml-[4px] px-[2px] leading-[13px] text-[#1550b8]">Signal options</legend>
          <div className="mt-[2px] flex">
            <div className="w-[65px] leading-[20px]">
              <div className="h-[20px] text-[11.5px]">Frequency:</div>
              <div className="h-[20px] text-[11.5px]">Duty cycle:</div>
              <div className="h-[20px] text-[11.5px]">Amplitude:</div>
              <div className="h-[20px] text-[11.5px]">Offset:</div>
            </div>
            <div className="grid grid-cols-[79px_40px] border-t border-l border-[#7f9db9]">
              <div className={cell}>1</div>
              <div className={cell}>kHz</div>
              <div className={off}>50</div>
              <div className={off}>
                <span className="pl-[2px]">%</span>
              </div>
              <div className={cell}>1</div>
              <div className={cell}>
                <span className="pl-[1px]">Vp</span>
              </div>
              <div className={cell}>0</div>
              <div className={cell}>
                <span className="pl-[1px]">V</span>
              </div>
            </div>
          </div>
          <div className="mt-[6px] ml-[27px] flex h-[20px] w-[120px] items-center justify-center rounded-[3px] border border-[#d8d5c4] bg-[#f0eee2] text-[#a9a89c]">
            Set rise/Fall time
          </div>
        </fieldset>
        <div className="flex pt-[11px] pl-[15px]">
          <div className="flex w-[13px] flex-col items-center">
            <span className="leading-[12px]">+</span>
            <Terminal filled />
          </div>
          <div className="ml-[50px] flex w-[40px] flex-col items-start">
            <span className="-mt-[6px] leading-[16px]">Common</span>
            <div className="h-[2px]" />
            <div className="ml-[8px]">
              <Terminal filled />
            </div>
          </div>
          <div className="ml-[48px] flex w-[13px] flex-col items-center">
            <span className="leading-[12px]">–</span>
            <Terminal />
          </div>
        </div>
      </div>
      <svg className="absolute right-0 bottom-0" width="10" height="10" viewBox="0 0 10 10">
        <path d="M7 1h2v2H7zM4 4h2v2H4zM7 4h2v2H7zM1 7h2v2H1zM4 7h2v2H4zM7 7h2v2H7z" fill="#b4b1a0" />
      </svg>
    </div>
  );
}

function TaskButton({ label, className, icon }: { label: string; className: string; icon: ReactNode }) {
  return (
    <div className={`flex h-[25px] w-[61px] items-center gap-[4px] rounded-[3px] pl-[9px] text-[11px] text-[#dfe9ff] ${className}`}>
      {icon}
      {label}
    </div>
  );
}

function Taskbar() {
  return (
    <div className="absolute top-[738px] left-0 flex h-[30px] w-[1024px] items-center border-t-2 border-[#3a86e8] bg-gradient-to-b from-[#245edb] via-[#2663e0] to-[#1a4fc0]">
      <div className="flex h-[30px] w-[96px] items-center gap-[4px] rounded-r-[10px] bg-gradient-to-b from-[#3f8f3f] via-[#3c973c] to-[#2f7a2f] pl-[10px] text-[19px] font-bold italic text-white">
        <svg width="20" height="19" viewBox="0 0 20 19">
          <path d="M2 3l7-1-1 6-7 1z" fill="#e0502a" />
          <path d="M11 2l7 1-1 6-7-1z" fill="#68b030" />
          <path d="M1 11l7-1-1 6-7 1z" fill="#3f7fe0" />
          <path d="M9 10l7 1-1 6-7-1z" fill="#f0c030" />
        </svg>
        start
      </div>
      <div className="ml-[11px] flex gap-[2px]">
        <div className="flex h-[25px] w-[61px] items-center gap-[4px] rounded-[3px] bg-[#3c81f3] pl-[10px] text-[11px] text-[#dfe9ff]">
          <svg width="15" height="15" viewBox="0 0 16 16">
            <circle cx="8" cy="8" r="7.5" fill="#e8453c" />
            <path d="M8 8L1.5 12A7.5 7.5 0 0 0 12 14.5z" fill="#3aa757" />
            <path d="M8 4h6.8A7.5 7.5 0 0 1 8 15.5z" fill="#f8c93e" />
            <circle cx="8" cy="8" r="3.3" fill="#4a8af4" stroke="#fff" />
          </svg>
          <span className="flex-1">3 (</span>
          <span className="mr-[4px] text-[8px]">▼</span>
        </div>
        <TaskButton
          label="M..."
          className="bg-[#e07a10]"
          icon={
            <svg width="16" height="14" viewBox="0 0 16 14">
              <path d="M3 1h9v5H3z" fill="#fff" />
              <path d="M0 6h16v8H0z" fill="#f4e0b0" stroke="#a06010" />
              <path d="M5 3h6M5 4.5h6" stroke="#666" />
            </svg>
          }
        />
        <TaskButton
          label="ci..."
          className="bg-[#3c81f3]"
          icon={
            <svg width="16" height="14" viewBox="0 0 16 14">
              <path d="M6 1h8v12H6z" fill="#222" />
              <circle cx="5" cy="7" r="4.5" fill="#ddd" stroke="#111" />
              <circle cx="5" cy="7" r="2" fill="#225" />
            </svg>
          }
        />
        <TaskButton
          label="n..."
          className="bg-[#1c4fb8]"
          icon={
            <svg width="16" height="14" viewBox="0 0 16 14">
              <path d="M1 2h14M1 5h14M2 8h10M2 11h4M9 11h5" stroke="#a8a4c0" strokeWidth="1.5" />
              <path d="M4 8v5M11 6v7" stroke="#7a4a90" strokeWidth="1.5" />
            </svg>
          }
        />
        <TaskButton
          label="u..."
          className="bg-[#3c81f3]"
          icon={
            <svg width="14" height="16" viewBox="0 0 14 16">
              <path d="M3 7h8l-1 8H4z" fill="#d8b040" />
              <path d="M3 1l3 6M7 1v6M11 1L8 7" stroke="#50b060" strokeWidth="1.5" />
              <path d="M5 1l2 6" stroke="#d04060" strokeWidth="1.5" />
            </svg>
          }
        />
      </div>
      <div className="ml-[15px] flex h-[17px] w-[15px] items-center justify-center rounded-[2px] border-2 border-black bg-white text-[12px] leading-none font-bold">
        ?
      </div>
      <div className="ml-[7px] flex w-[12px] flex-col items-center gap-[3px]">
        <svg width="9" height="8" viewBox="0 0 9 8" fill="none">
          <path d="M2.5 2V.5h6v4H7M.5 2.5h6v5h-6z" stroke="#fff" />
        </svg>
        <div className="h-0 w-0 border-x-[3px] border-t-[4px] border-x-transparent border-t-white" />
      </div>
      <div className="ml-[9px] flex h-[22px] w-[368px] flex-col items-center justify-center bg-white">
        <span className="text-[11px] leading-[11px] font-bold text-[#555]">nero</span>
        <span className="text-[7.5px] leading-[9px] tracking-[1px] text-[#555]">@SEARCH</span>
      </div>
      <div className="ml-[6px] flex h-[16px] w-[16px] items-center justify-center rounded-[2px] bg-[#4ab848]">
        <svg width="12" height="10" viewBox="0 0 12 10">
          <path d="M0 3h6V0l6 5-6 5V7H0z" fill="#fff" />
        </svg>
      </div>
      <div className="ml-[5px] h-0 w-0 border-x-[3px] border-t-[4px] border-x-transparent border-t-[#102050]" />
      <div className="ml-[16px] flex h-[30px] flex-1 items-center border-l border-[#0f3fa0] bg-gradient-to-b from-[#1a90e8] via-[#1290e0] to-[#0a70c8] text-[11px] text-[#e6f2ff]">
        <div className="-ml-[8px] flex h-[16px] w-[16px] items-center justify-center rounded-full border border-white bg-[#3a8ae8]">
          <svg width="8" height="9" viewBox="0 0 8 9" fill="none">
            <path d="M6 1L2.5 4.5 6 8" stroke="#fff" strokeWidth="2" />
          </svg>
        </div>
        <svg className="ml-[2px]" width="16" height="16" viewBox="0 0 16 16">
          <rect x="6" y="1" width="9" height="8" fill="#c8d8f0" stroke="#223" />
          <rect x="1" y="5" width="9" height="8" fill="#4a7ad0" stroke="#223" />
        </svg>
        <div className="ml-[3px] flex h-[15px] w-[15px] items-center justify-center rounded-full bg-[#e8501c] text-[12px] leading-none font-bold text-white">
          !
        </div>
        <svg className="ml-[3px]" width="13" height="15" viewBox="0 0 13 15">
          <path d="M6.5 0C4 2 2 2 0 2c0 6 1 10 6.5 13C12 12 13 8 13 2c-2 0-4 0-6.5-2z" fill="#c83048" />
          <path d="M4 5l5 5M9 5l-5 5" stroke="#fff" strokeWidth="2" />
        </svg>
        <span className="ml-[12px]">6:26 PM</span>
      </div>
    </div>
  );
}

export default function App() {
  return (
    <div className="relative h-[768px] w-[1024px] overflow-hidden bg-[#ece9d8] [font-family:'Liberation_Sans',sans-serif] text-[11px] text-[#111]">
      <BackgroundWindows />

      <div className="absolute top-0 left-0 flex h-[738px] w-[810px] flex-col border-r-[3px] border-[#0a3ad0] bg-[#ece9d8]">
        <div className="flex h-[5px] justify-end gap-[2px] bg-[#0a52dc] pr-[3px]">
          <div className="h-[2px] w-[18px] bg-[#8aa8e8]" />
          <div className="h-[2px] w-[18px] bg-[#8aa8e8]" />
          <div className="h-[2px] w-[18px] bg-[#c86050]" />
        </div>
        <div className="flex h-[25px] items-center pr-[4px]">
          <span className="w-[39px]">ulate</span>
          <span className="w-[54px]">
            Tra<span className="underline">n</span>sfer
          </span>
          <span className="w-[37px]">
            <span className="underline">T</span>ools
          </span>
          <span className="w-[52px]">
            <span className="underline">R</span>eports
          </span>
          <span className="w-[50px]">
            <span className="underline">O</span>ptions
          </span>
          <span className="w-[51px]">
            <span className="underline">W</span>indow
          </span>
          <span>
            <span className="underline">H</span>elp
          </span>
          <div className="ml-auto">
            <MdiButtons />
          </div>
        </div>
        <Toolbar1 />
        <Toolbar2 />
        <Toolbar3 />
        <div className="flex flex-col">
          <div className="h-[1px] border-t border-[#808070]" />
        </div>
        <div className="flex h-[428px] pt-[3px]">
          <div className="flex h-[425px] w-[775px] flex-col border-t-[3px] border-[#808080]">
            <div className="flex h-[422px]">
              <div className="h-full w-[759px]">
                <Schematic />
              </div>
              <div className="flex w-[16px] flex-col bg-[#c3d3f8]">
                <div className="flex h-[17px] items-center justify-center rounded-[2px] bg-[#dde6fb]">
                  <svg width="9" height="7" viewBox="0 0 9 7" fill="none">
                    <path d="M1 5.5l3.5-3.5L8 5.5" stroke="#3a4f8f" strokeWidth="2" />
                  </svg>
                </div>
              </div>
            </div>
          </div>
          <div className="ml-[4px] h-full flex-1 border-l border-[#c9c6b4] pt-[11px] pl-[4px]">
            <svg width="18" height="20" viewBox="0 0 18 20" fill="none">
              <path d="M3 2h12v16H3zM1 4v14M17 4v14" stroke="#c0bfb2" strokeWidth="1.5" />
              <circle cx="9" cy="11" r="3.5" stroke="#c0bfb2" />
              <path d="M6 4h6v3H6z" fill="#c0bfb2" />
            </svg>
          </div>
        </div>
        <div className="flex h-[14px] items-center bg-[#c1d3fb]">
          <div className="flex h-[14px] w-[9px] items-center justify-center bg-[#dde6fb]">
            <svg width="7" height="9" viewBox="0 0 7 9" fill="none">
              <path d="M4 1L1 4.5 4 8" stroke="#3a4f8f" strokeWidth="2" />
            </svg>
          </div>
          <div className="ml-[289px] flex gap-[1px]">
            <div className="h-[6px] w-px bg-[#e8eefc]" />
            <div className="h-[6px] w-px bg-[#e8eefc]" />
            <div className="h-[6px] w-px bg-[#e8eefc]" />
            <div className="h-[6px] w-px bg-[#e8eefc]" />
          </div>
        </div>
        <div className="relative h-[36px] border-b border-[#8a8878]">
          <div className="absolute top-[8px] left-0 h-[1px] w-full bg-[#8a8878]" />
          <div className="absolute top-[8px] left-0 flex h-[24px] w-[64px] items-center rounded-br-[3px] border-r border-b border-[#555] bg-[#ece9d8] pl-[15px] text-[12px]">
            <svg className="absolute -top-[1px] left-0" width="11" height="14" viewBox="0 0 11 14" fill="none">
              <path d="M0 2h6l4 4v7H0z" fill="#fff" stroke="#222" />
              <path d="M2 5v6M6 3v6" stroke="#c81226" />
            </svg>
            <span className="mt-[2px]">non inv *</span>
          </div>
        </div>
        <div className="h-[8px] border-b border-[#8a8878]" />
        <div className="h-[104px] w-[799px] border-r-2 border-[#a8a89a] bg-white pt-[3px] text-[11.5px] leading-[14px]">
          <div>nv - Thursday, November 22, 2012, 6:26:35 PM ------</div>
          <div>eted, 0 error(s), 0 warning(s) =======</div>
        </div>
        <div className="flex h-[30px] border-t-2 border-[#a8a89a]">
          <div className="flex h-[19px] w-[50px] items-center border-r border-b border-[#8a8878] whitespace-nowrap">per layers</div>
          <div className="flex h-[22px] w-[63px] items-center justify-center rounded-br-[3px] border-r border-b border-[#555] pt-[2px]">Simulation</div>
        </div>
        <div className="flex-1 border-t-2 border-[#aca899]" />
      </div>

      <Oscilloscope />
      <FunctionGenerator />
      <Taskbar />
    </div>
  );
}
